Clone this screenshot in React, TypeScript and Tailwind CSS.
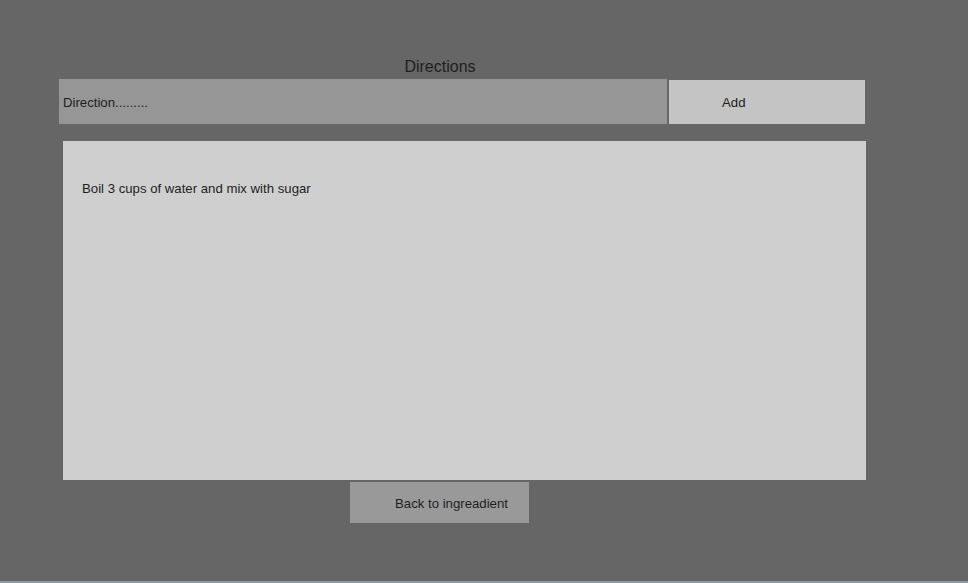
export default function App() {
    return (
        <div className="h-[583px] w-full bg-[#666666] border-b-2 border-[#8c9aa6] font-['Liberation_Sans',Arial,sans-serif] text-[#1e1e1e] overflow-hidden">
            <div className="w-[880px] pt-[57px] text-center text-[16px] leading-[20px]">Directions</div>
            <div className="flex items-start ml-[59px] mt-[2px]">
                <input
                    className="w-[608px] h-[45px] bg-[#969696] pl-[4px] pt-[2px] text-[13.2px] text-[#1e1e1e] placeholder:text-[#1e1e1e] outline-none"
                    placeholder="Direction........."
                />
                <button className="w-[196px] h-[44px] mt-[1px] ml-[2px] bg-[#c4c4c4] pl-[53px] pt-[2px] text-left text-[13.2px]">Add</button>
            </div>
            <div className="ml-[63px] mt-[17px] w-[803px] h-[339px] bg-[#cfcfcf] pl-[19px] pt-[40px] text-[13.2px] leading-[16px]">
                <div>Boil 3 cups of water and mix with sugar</div>
            </div>
            <button className="block ml-[350px] mt-[2px] w-[179px] h-[41px] bg-[#999999] pl-[45px] pt-[2px] text-left text-[13.2px]">Back to ingreadient</button>
        </div>
    )
}
